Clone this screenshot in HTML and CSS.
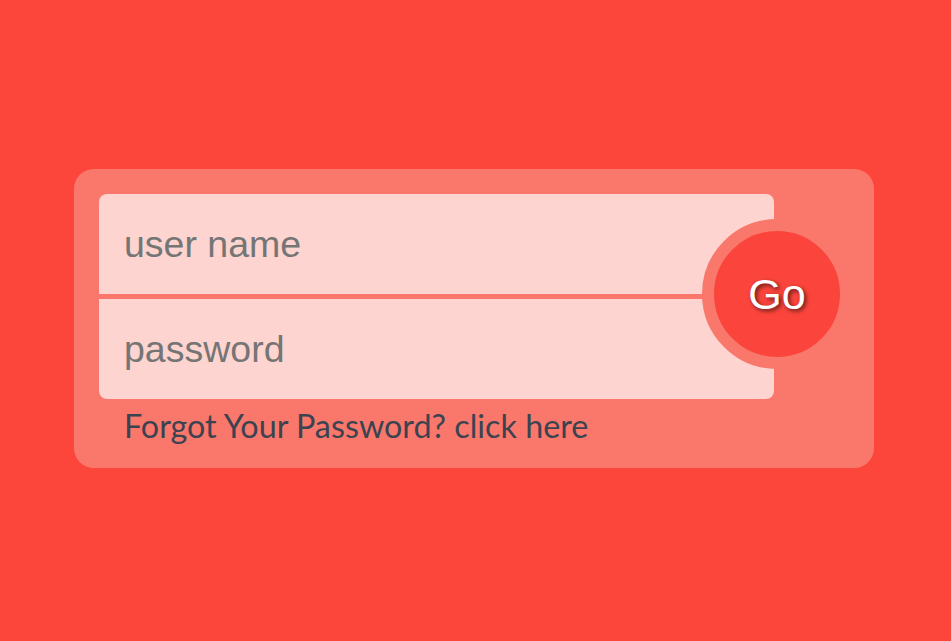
FILE: index.html
```html
<!DOCTYPE html>
<html lang="en">
<head>
<meta charset="utf-8">
<title>Login</title>
<link rel="stylesheet" href="styles.css">
</head>
<body>
<form class="card">
  <div class="fields">
    <input class="field field-top" type="text" placeholder="user name">
    <input class="field field-bottom" type="password" placeholder="password">
    <button class="go" type="button">Go</button>
  </div>
  <p class="forgot">Forgot Your Password? click here</p>
</form>
</body>
</html>
```
FILE: styles.css
```css
html, body {
  margin: 0;
  padding: 0;
}
body {
  background: #fc463c;
  min-height: 641px;
  display: flex;
  align-items: flex-start;
  justify-content: flex-start;
  padding: 169px 0 0 74px;
  box-sizing: border-box;
}
.card {
  width: 800px;
  height: 299px;
  box-sizing: border-box;
  background: #f9786b;
  border-radius: 20px;
  padding: 25px 25px 0 25px;
  margin: 0;
}
.fields {
  position: relative;
  width: 675px;
  display: flex;
  flex-direction: column;
  gap: 5px;
}
.field {
  display: block;
  width: 100%;
  height: 100px;
  box-sizing: border-box;
  border: none;
  outline: none;
  margin: 0;
  background: #fdd4cf;
  padding: 0 25px;
  font-family: "Liberation Sans", Arial, sans-serif;
  font-size: 37.5px;
  color: #555;
}
.field::placeholder {
  color: #757575;
}
.field-top {
  border-radius: 8px 8px 0 0;
}
.field-bottom {
  border-radius: 0 0 8px 8px;
}
.go {
  position: absolute;
  left: 603px;
  top: 25px;
  width: 150px;
  height: 150px;
  box-sizing: border-box;
  border-radius: 50%;
  border: 12px solid #f9786b;
  background: #fb453c;
  color: #fff;
  font-family: "Liberation Sans", Arial, sans-serif;
  font-size: 43px;
  padding: 0;
  text-shadow: 2px 2px 4px rgba(0, 0, 0, 0.65);
  cursor: pointer;
}
.forgot {
  margin: 7px 0 0 25px;
  font-family: Lato, "Open Sans", sans-serif;
  font-size: 32.3px;
  line-height: 40px;
  color: #3c4350;
}
```
